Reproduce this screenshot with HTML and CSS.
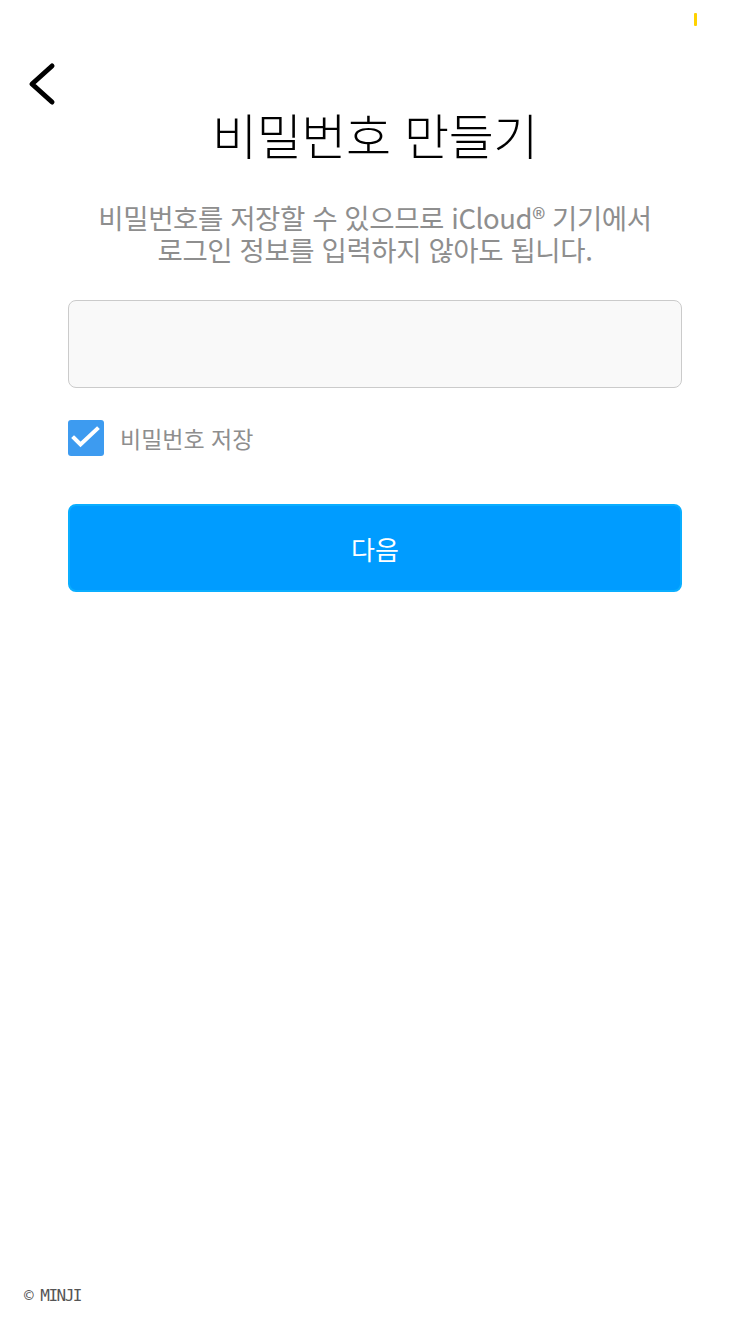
FILE: index.html
```html
<!DOCTYPE html>
<html lang="ko">
<head>
<meta charset="utf-8">
<title>비밀번호 만들기</title>
<link rel="stylesheet" href="styles.css">
</head>
<body>
<div class="page">
  <div class="status"><span class="status-mark"></span></div>
  <div class="nav">
    <button class="back" aria-label="뒤로">
      <svg width="34" height="44" viewBox="0 0 34 44"><path d="M26 4 L6 22 L26 40" fill="none" stroke="#000" stroke-width="5" stroke-linecap="round" stroke-linejoin="round"/></svg>
    </button>
  </div>
  <h1 class="title">비밀번호 만들기</h1>
  <p class="desc"><span class="desc-line">비밀번호를 저장할 수 있으므로 iCloud® 기기에서</span><span class="desc-line">로그인 정보를 입력하지 않아도 됩니다.</span></p>
  <div class="form">
    <div class="field"></div>
    <label class="save">
      <span class="check">
        <svg width="36" height="36" viewBox="0 0 36 36"><path d="M6 18 L12.5 24.5 L29 9" fill="none" stroke="#fff" stroke-width="4" stroke-linecap="square"/></svg>
      </span>
      <span class="save-text">비밀번호 저장</span>
    </label>
    <button class="next">다음</button>
  </div>
  <footer class="footer">© MINJI</footer>
</div>
</body>
</html>
```
FILE: styles.css
```css
html, body {
  margin: 0;
  padding: 0;
  background: #fff;
}
.page {
  width: 750px;
  min-height: 1334px;
  display: flex;
  flex-direction: column;
  font-family: "Noto Sans CJK KR", "Noto Sans", sans-serif;
}
.status {
  height: 40px;
  display: flex;
  justify-content: flex-end;
  padding-right: 53px;
  box-sizing: border-box;
  padding-top: 13px;
}
.status-mark {
  width: 3px;
  height: 13px;
  background: #ffd200;
  border-radius: 1px;
}
.nav {
  margin-top: 22px;
  height: 44px;
  display: flex;
  padding-left: 26px;
}
.back {
  border: 0;
  background: none;
  padding: 0;
  width: 34px;
  height: 44px;
  display: block;
}
.back svg { display: block; }
.title {
  margin: 0;
  height: 58px;
  line-height: 56px;
  font-size: 49px;
  font-weight: 300;
  color: #000;
  text-align: center;
  letter-spacing: -0.4px;
}
.desc {
  margin: 37px 0 0;
  font-size: 27.5px;
  color: #8e8e8e;
  text-align: center;
  letter-spacing: -0.4px;
}
.desc-line {
  display: block;
  height: 32px;
  line-height: 32px;
  white-space: nowrap;
}
.form {
  padding: 0 68px;
  display: flex;
  flex-direction: column;
}
.field {
  margin-top: 35px;
  height: 88px;
  box-sizing: border-box;
  background: #f9f9f9;
  border: 1px solid #cbcbcb;
  border-radius: 8px;
}
.save {
  margin-top: 32px;
  display: flex;
  align-items: center;
  gap: 16px;
  height: 36px;
}
.check {
  width: 36px;
  height: 36px;
  background: #3d9bf0;
  border-radius: 3px;
  display: block;
}
.check svg { display: block; }
.save-text {
  font-size: 23px;
  color: #8e8e8e;
}
.next {
  margin-top: 48px;
  height: 88px;
  box-sizing: border-box;
  border: 2px solid #0aaeff;
  background: #009cff;
  border-radius: 8px;
  color: #fff;
  font-family: "Noto Sans CJK KR", "Noto Sans", sans-serif;
  font-size: 26px;
  padding: 0;
}
.footer {
  margin-top: auto;
  padding: 0 0 26px 24px;
  font-family: "DejaVu Sans Mono", monospace;
  font-size: 16px;
  line-height: 24px;
  letter-spacing: -1.5px;
  color: #555;
}
```
